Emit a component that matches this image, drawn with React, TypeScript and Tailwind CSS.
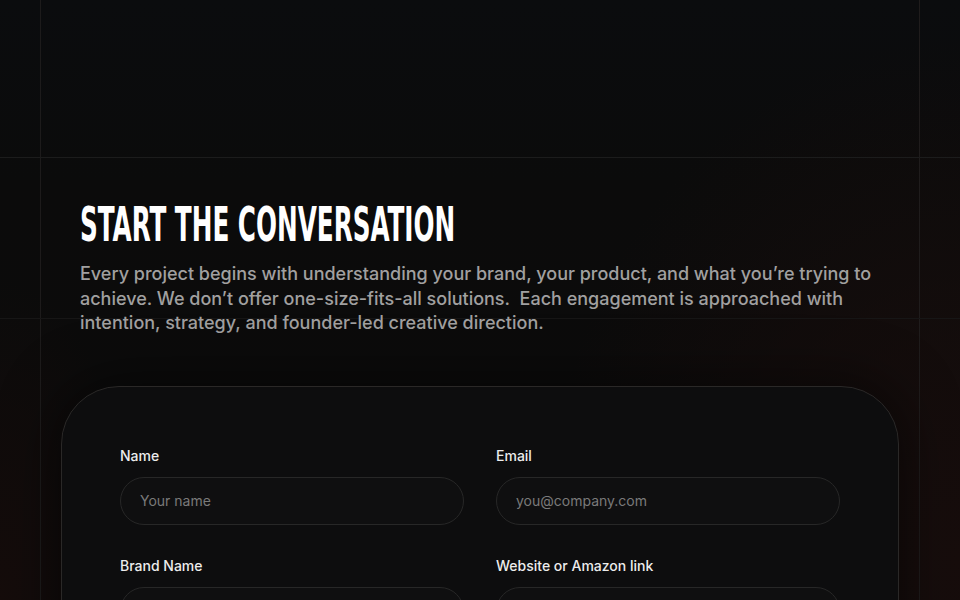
import React from "react";

function Field({ label, placeholder }: { label: string; placeholder?: string }) {
  return (
    <div className="flex flex-col">
      <label className="mb-[11px] text-sm font-medium leading-5 text-[#ececec]">{label}</label>
      <input
        placeholder={placeholder}
        className="h-12 w-full rounded-full border border-[#272727] bg-[#0f0f10] pl-[19px] pr-5 text-sm text-[#e5e5e5] placeholder:text-[#7a7a7a] outline-none"
        style={{ fontFamily: "Inter, 'Noto Sans', sans-serif" }}
      />
    </div>
  );
}

export default function App() {
  return (
    <div
      className="relative h-[600px] w-[960px] overflow-hidden bg-[#0b0b0b] bg-[radial-gradient(ellipse_420px_520px_at_960px_560px,#170d0c_0%,rgba(23,13,12,0.6)_50%,rgba(11,11,11,0)_100%),radial-gradient(ellipse_140px_320px_at_0px_600px,#150c0b_0%,rgba(11,11,11,0)_100%),linear-gradient(180deg,#0b0c0e_0%,#0b0b0b_30%,#0c0b0b_100%)]"
      style={{ fontFamily: "Inter, 'Noto Sans', sans-serif" }}
    >
      {/* decorative grid lines */}
      <div className="pointer-events-none absolute inset-y-0 left-[40px] w-px bg-[#1d1b1b]" />
      <div className="pointer-events-none absolute inset-y-0 left-[919px] w-px bg-[#1f1c1c]" />
      <div className="pointer-events-none absolute inset-x-0 top-[157px] h-px bg-[#1c1c1c]" />
      <div className="pointer-events-none absolute inset-x-0 top-[318px] h-px bg-[#171616]" />

      <div className="h-[158px]" />

      <section className="relative px-20 pt-[42px]">
        <h1
          className="origin-left scale-x-[0.572] whitespace-nowrap text-[48px] font-bold leading-none text-white"
          style={{ fontFamily: "'DejaVu Sans Condensed', 'DejaVu Sans', sans-serif" }}
        >
          START THE CONVERSATION
        </h1>
        <p className="mt-[14px] max-w-[800px] text-lg font-medium leading-[24.5px] text-[#a1a0a0]">
          Every project begins with understanding your brand, your product, and what you’re trying to
          achieve. We don’t offer one-size-fits-all solutions.&nbsp; Each engagement is approached with
          intention, strategy, and founder-led creative direction.
        </p>
      </section>

      <div className="relative mx-[61px] mt-[50px] rounded-[58px] border border-[#2a2827] bg-[#0d0d0e] px-[58px] pt-[59px] pb-16 shadow-[0_0_60px_rgba(0,0,0,0.6)]">
        <div className="grid grid-cols-2 gap-x-8 gap-y-[31px]">
          <Field label="Name" placeholder="Your name" />
          <Field label="Email" placeholder="you@company.com" />
          <Field label="Brand Name" />
          <Field label="Website or Amazon link" />
        </div>
      </div>
    </div>
  );
}
